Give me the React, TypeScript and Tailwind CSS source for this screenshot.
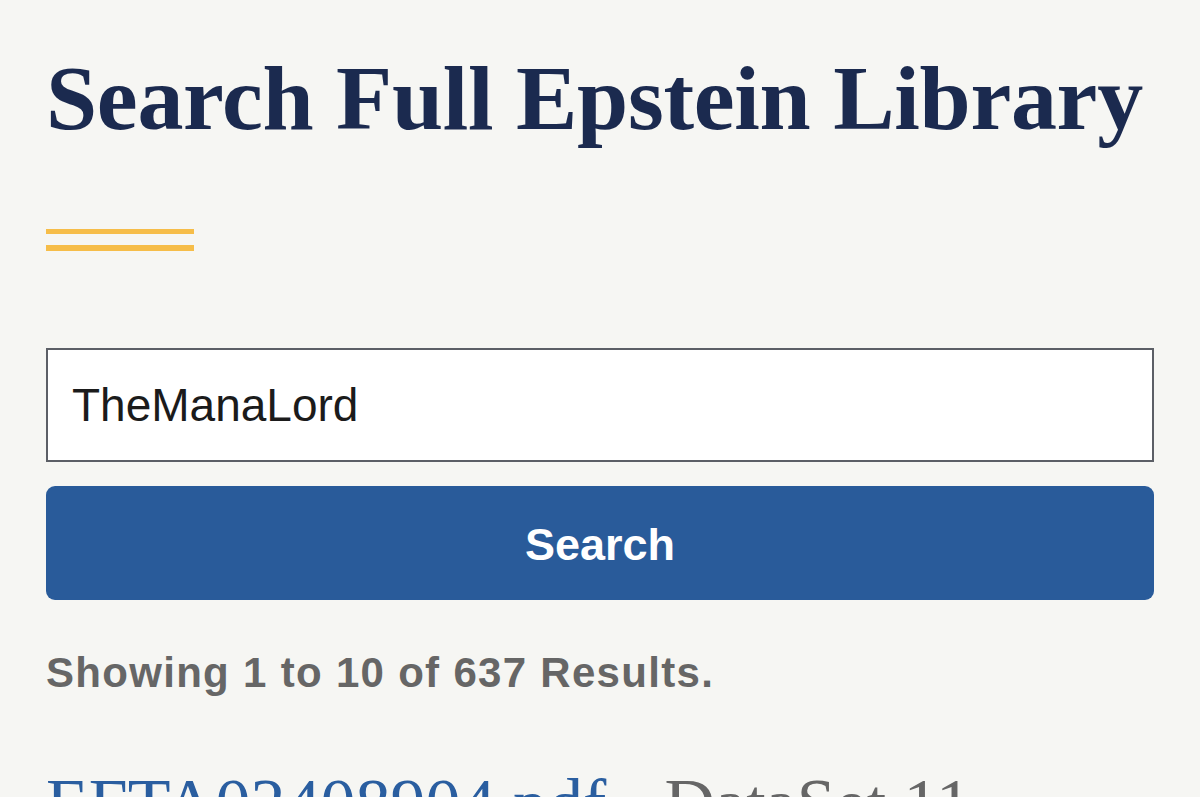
import React from 'react';

const serif = { fontFamily: '"Liberation Serif", "DejaVu Serif", serif' };
const sans = { fontFamily: '"Liberation Sans", Arial, sans-serif' };

export default function App() {
  return (
    <div className="h-[797px] w-[1200px] overflow-hidden bg-[#f6f6f3]">
      <div className="px-[46px]">
        <h1
          className="whitespace-nowrap pt-[48px] text-[92px] font-bold leading-[100px] tracking-[-0.3px] text-[#1b2a4f]"
          style={serif}
        >
          Search Full Epstein Library
        </h1>

        {/* accent rule */}
        <div className="mt-[81px] flex w-[148px] flex-col gap-[11px]">
          <div className="h-[5px] bg-[#f6bd49]" />
          <div className="h-[6px] bg-[#f6bd49]" />
        </div>

        <div className="mt-[97px] flex h-[114px] items-center border-2 border-[#5c5f66] bg-white px-[24px]">
          <span className="text-[46px] text-[#1b1b1b]" style={sans}>
            TheManaLord
          </span>
        </div>

        <button
          className="mt-[24px] flex h-[114px] w-full items-center justify-center rounded-[9px] bg-[#295b9a] pt-[4px] text-[45px] font-bold text-white"
          style={sans}
        >
          Search
        </button>

        <p
          className="mt-[49px] text-[42px] font-bold leading-[48px] tracking-[1.3px] text-[#666666]"
          style={sans}
        >
          Showing 1 to 10 of 637 Results.
        </p>

        <div className="mt-[72px] whitespace-nowrap text-[70px] leading-[70px]" style={serif}>
          <span className="text-[#2a5ea0]">EFTA02408904.pdf</span>
          <span className="text-[#666666]"> - DataSet 11</span>
        </div>
      </div>
    </div>
  );
}
